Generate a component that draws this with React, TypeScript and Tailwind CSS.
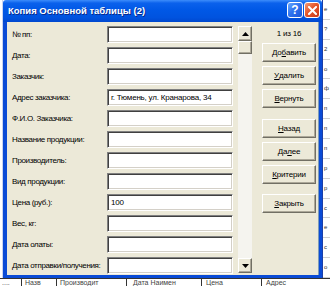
import React from 'react'

const fields: [string, string][] = [
  ['№ пп:', ''],
  ['Дата:', ''],
  ['Заказчик:', ''],
  ['Адрес заказчика:', 'г. Тюмень, ул. Кранарова, 34'],
  ['Ф.И.О. Заказчика:', ''],
  ['Название продукции:', ''],
  ['Производитель:', ''],
  ['Вид продукции:', ''],
  ['Цена (руб.):', '100'],
  ['Вес, кг:', ''],
  ['Дата олаты:', ''],
  ['Дата отправки/получения:', ''],
]

const raised =
  'bg-[#ece9d8] border border-t-white border-l-white border-r-[#716f64] border-b-[#716f64] shadow-[inset_-1px_-1px_0_#aca899]'

function Btn({ children, className = '' }: { children: React.ReactNode; className?: string }) {
  return (
    <button
      type="button"
      className={`h-[19px] w-[54px] flex items-center justify-center text-black ${raised} ${className}`}
    >
      {children}
    </button>
  )
}

function Arrow({ up }: { up?: boolean }) {
  return (
    <svg width="7" height="4" viewBox="0 0 7 4">
      {up ? <path d="M3.5 0 L7 4 L0 4 Z" fill="#000" /> : <path d="M0 0 L7 0 L3.5 4 Z" fill="#000" />}
    </svg>
  )
}

function U({ children }: { children: React.ReactNode }) {
  return <span className="underline underline-offset-1">{children}</span>
}

export default function App() {
  return (
    <div className="w-[330px] h-[286px] bg-white overflow-hidden flex flex-col font-['Liberation_Sans',Arial,sans-serif] text-[8px] text-black">
      <div className="flex h-[278px]">
        {/* sheet behind, left */}
        <div className="w-[3px] bg-white border-r border-[#c8d4f0]" />

        {/* dialog */}
        <div className="w-[319px] flex flex-col">
          {/* title bar */}
          <div className="h-[22px] flex items-start rounded-t-[3px] bg-[linear-gradient(to_bottom,#3d8dfb_0%,#0b61ec_14%,#0058e6_45%,#0053df_80%,#0048cf_100%)]">
            <div className="flex-1 pl-[5px] pt-[5px] text-white font-bold text-[9.5px] leading-[12px] [text-shadow:1px_1px_0_#0a2a8a]">
              Копия Основной таблицы (2)
            </div>
            <div className="flex gap-[1px] pt-[2px] pr-[2px]">
              <div className="w-[16px] h-[16px] rounded-[3px] border border-white flex items-center justify-center bg-[linear-gradient(135deg,#6aa8ff_0%,#2f74f0_45%,#1b55d8_100%)] text-white font-bold text-[12px] leading-none">
                ?
              </div>
              <div className="w-[16px] h-[16px] rounded-[3px] border border-white flex items-center justify-center bg-[linear-gradient(135deg,#f39a78_0%,#e5572b_45%,#c7391a_100%)]">
                <svg width="9" height="9" viewBox="0 0 9 9">
                  <path d="M1 1 L8 8 M8 1 L1 8" stroke="#fff" strokeWidth="2" strokeLinecap="square" />
                </svg>
              </div>
            </div>
          </div>

          <div className="flex flex-1">
            <div className="w-[4px] bg-[#0a4bd6]" />

            {/* client area */}
            <div className="w-[311px] bg-[#ece9d8] flex pt-[4px]">
              <div className="grid grid-cols-[100px_126px] auto-rows-[17px] gap-y-[4px] h-fit">
                {fields.map(([label, value]) => (
                  <React.Fragment key={label}>
                    <div className="pl-[5px] flex items-center whitespace-nowrap tracking-[-0.35px]">{label}</div>
                    <div className="bg-white flex items-center px-[3px] whitespace-nowrap overflow-hidden tracking-[-0.2px] border border-t-[#808080] border-l-[#808080] border-r-white border-b-white shadow-[inset_1px_1px_0_#404040,inset_-1px_-1px_0_#d4d0c8]">
                      {value}
                    </div>
                  </React.Fragment>
                ))}
              </div>

              {/* scrollbar */}
              <div className="ml-[5px] w-[14px] h-[247px] flex flex-col bg-[#f5f4ef]">
                <div className={`h-[15px] flex items-center justify-center ${raised}`}>
                  <Arrow up />
                </div>
                <div className={`h-[13px] ${raised}`} />
                <div className="flex-1" />
                <div className={`h-[15px] flex items-center justify-center ${raised}`}>
                  <Arrow />
                </div>
              </div>

              {/* buttons */}
              <div className="pl-[10px] flex flex-col tracking-[-0.2px]">
                <div className="h-[15px] w-[54px] flex items-center justify-center">1 из 16</div>
                <Btn className="mt-[2px]">
                  До<U>б</U>авить
                </Btn>
                <Btn className="mt-[4px]">
                  <U>У</U>далить
                </Btn>
                <Btn className="mt-[4px]">
                  <U>В</U>ернуть
                </Btn>
                <Btn className="mt-[11px]">
                  <U>Н</U>азад
                </Btn>
                <Btn className="mt-[4px]">
                  Да<U>л</U>ее
                </Btn>
                <Btn className="mt-[4px]">
                  <U>К</U>ритерии
                </Btn>
                <Btn className="mt-[10px]">
                  <U>З</U>акрыть
                </Btn>
              </div>
            </div>

            <div className="w-[4px] bg-[#0a4bd6] border-l border-[#7f9db9]" />
          </div>
          <div className="h-[3px] bg-[#0a4bd6]" />
        </div>

        {/* sheet behind, right */}
        <div className="flex-1 flex flex-col overflow-hidden border-l border-[#1b3fa8] text-[6px] leading-[7px] text-[#333]">
          {['е', '?', '2', 'о', 'ф', 'п', 'п', 'п', 'р', 'р', 'с', 'е', 'с', 'о'].map((t, i) => (
            <div key={i} className="h-[20px] border-b border-[#d0d0d0] pl-[1px] pt-[6px]">
              {t}
            </div>
          ))}
        </div>
      </div>

      {/* sheet behind, bottom */}
      <div className="flex-1 flex border-t border-[#333] overflow-hidden text-[7px] leading-[7px] text-[#444] whitespace-nowrap">
        <div className="w-[22px] border-r border-[#333] pl-[2px]">....</div>
        <div className="w-[35px] border-r border-[#333] pl-[3px]">Назв</div>
        <div className="w-[70px] border-r border-[#333] pl-[3px]">Производит</div>
        <div className="w-[75px] border-r border-[#333] pl-[6px]">Дата Наимен</div>
        <div className="w-[60px] border-r border-[#333] pl-[4px]">Цена</div>
        <div className="flex-1 pl-[4px]">Адрес</div>
      </div>
    </div>
  )
}
